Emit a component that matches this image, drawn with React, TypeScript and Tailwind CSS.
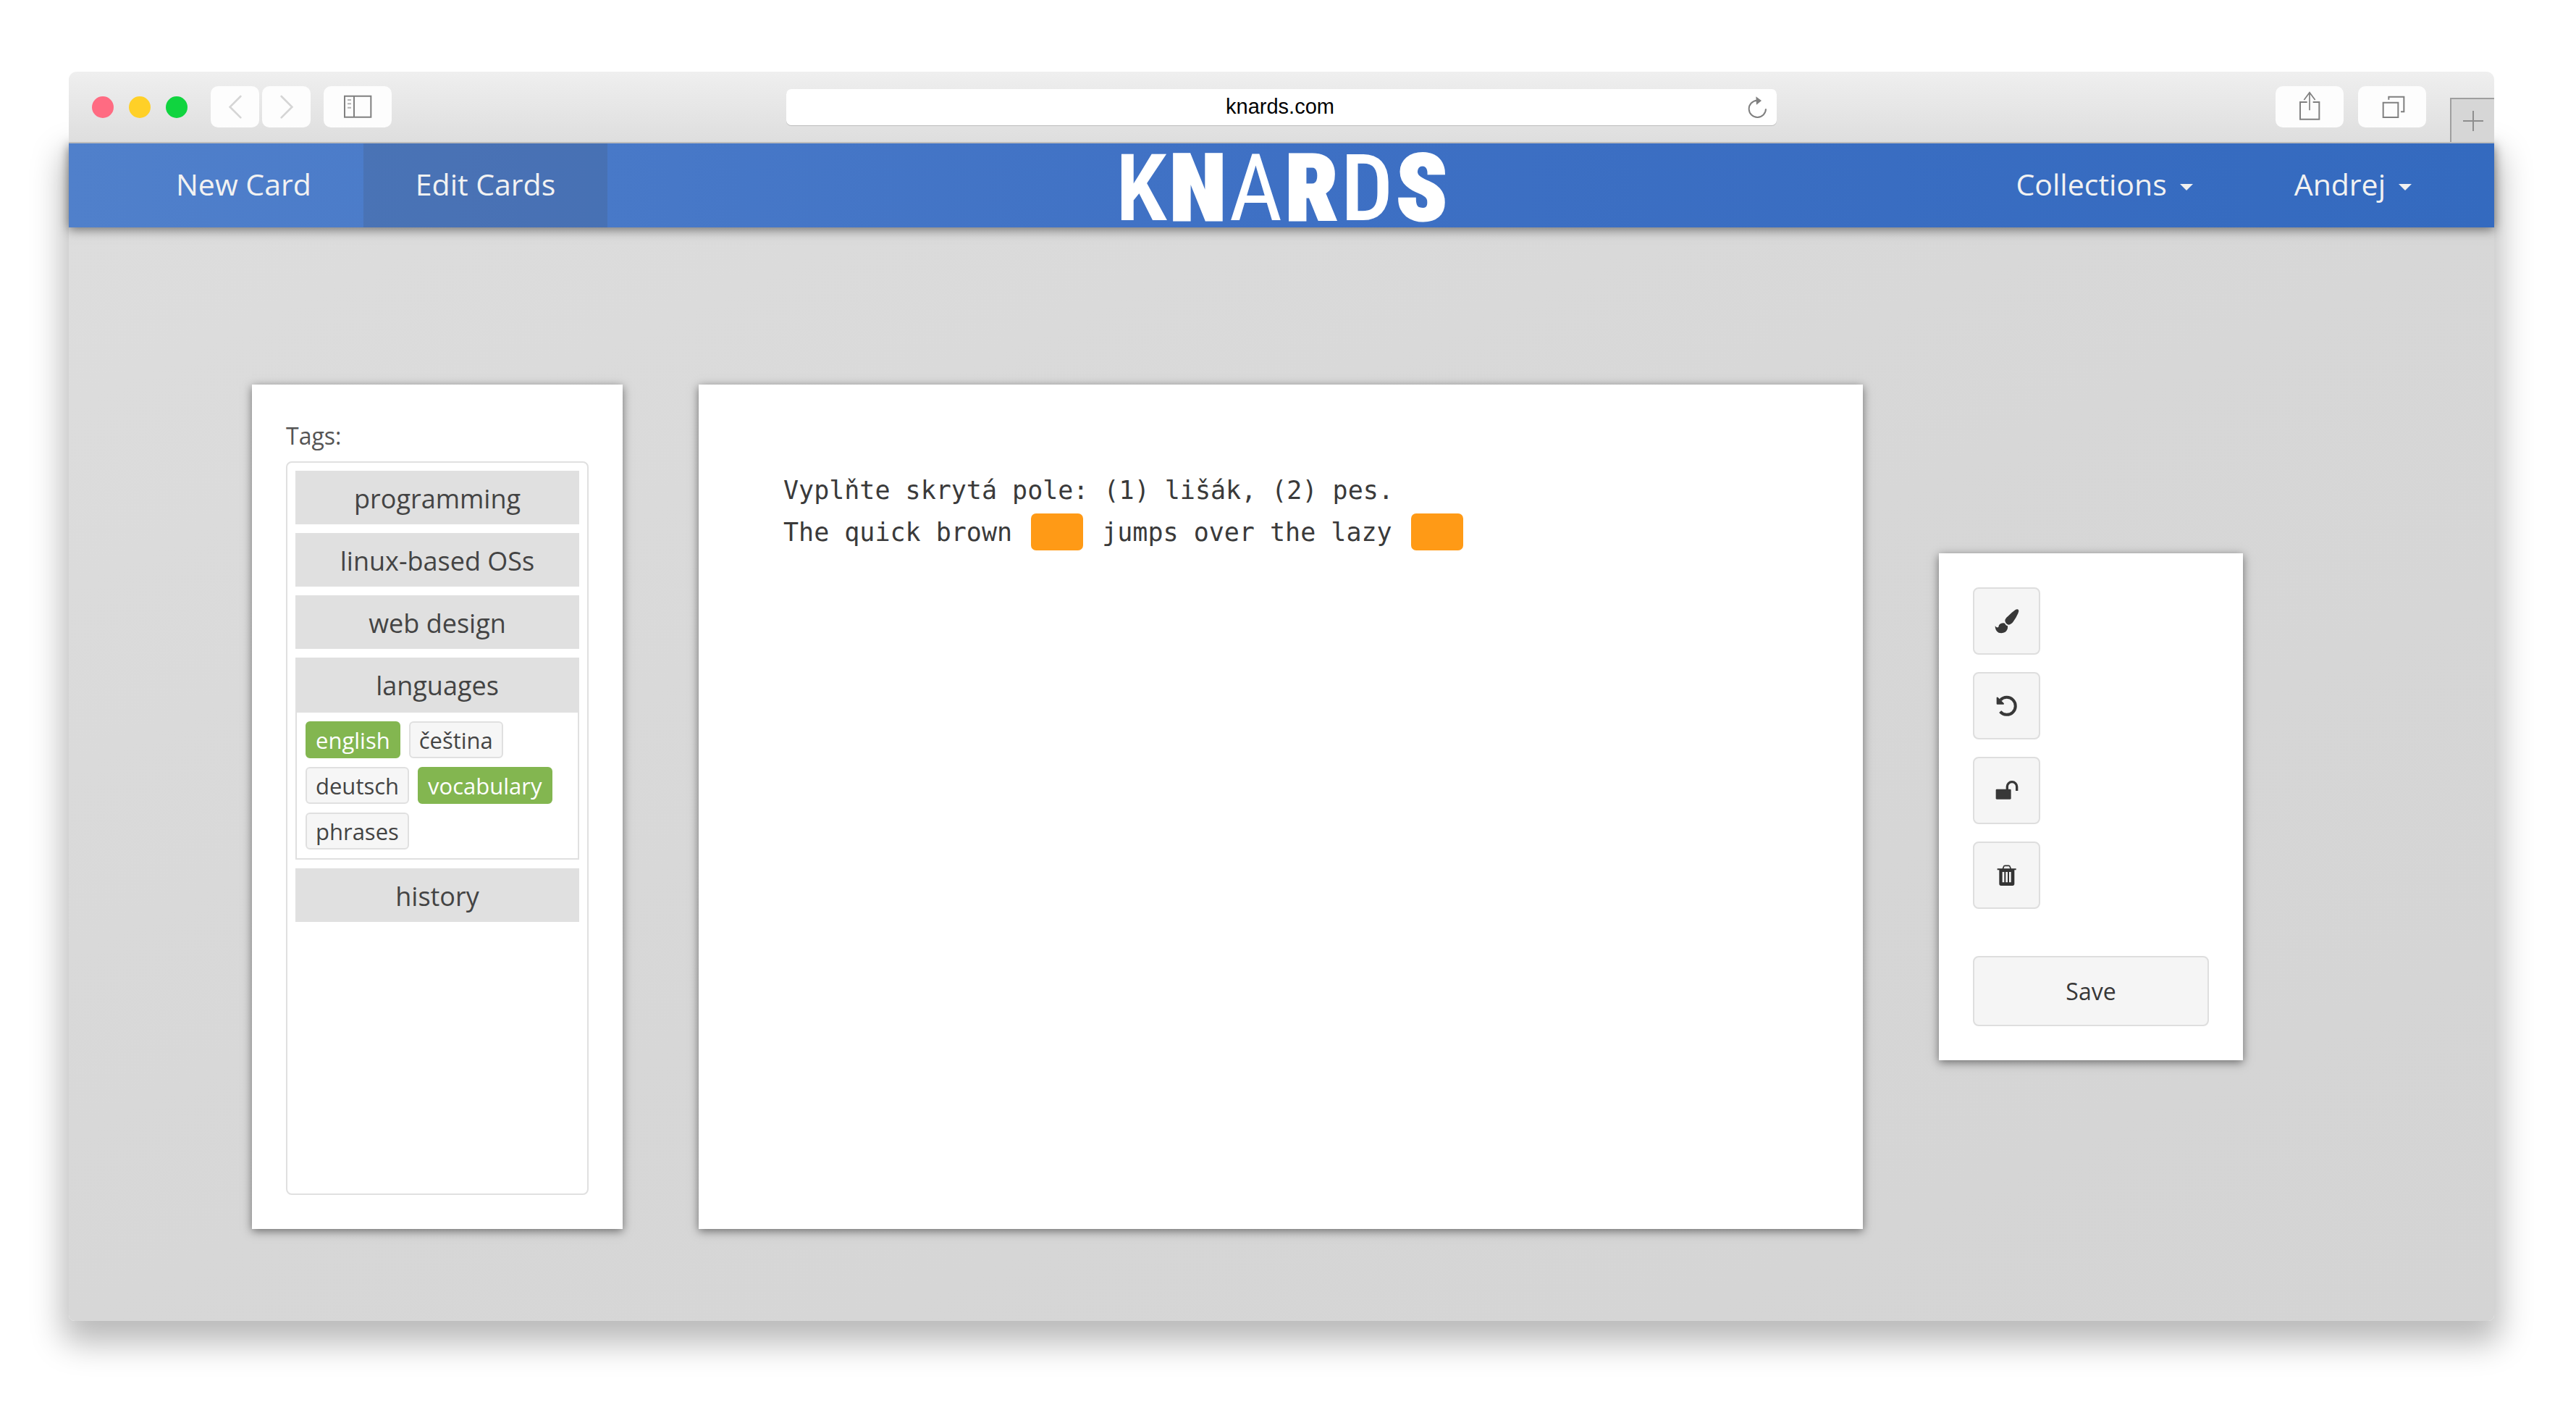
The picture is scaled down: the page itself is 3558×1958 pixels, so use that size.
import React, { useState } from "react";

type Tag = { name: string; active: boolean };

const topGroups = ["programming", "linux-based OSs", "web design"];

const languageTags: Tag[] = [
  { name: "english", active: true },
  { name: "čeština", active: false },
  { name: "deutsch", active: false },
  { name: "vocabulary", active: true },
  { name: "phrases", active: false },
];

function ToolbarButton({ label, wide, children }: { label: string; wide?: boolean; children: React.ReactNode }) {
  return (
    <button
      type="button"
      aria-label={label}
      className={`flex h-[57px] items-center justify-center rounded-[10px] bg-[#fdfdfd] ${wide ? "w-[94px]" : "w-[67px]"}`}
    >
      {children}
    </button>
  );
}

function BrowserToolbar() {
  return (
    <header className="relative z-10 grid h-[99px] grid-cols-[1fr_minmax(0,1368px)_1fr] items-center rounded-t-[11px] border-b-2 border-[#bdbdbd] bg-linear-to-b from-[#efefef] to-[#dedede]">
      <div className="flex items-center pl-8">
        <div className="flex gap-[21px]">
          <button type="button" aria-label="Close" className="size-[30px] rounded-full bg-[#ff6b82]" />
          <button type="button" aria-label="Minimize" className="size-[30px] rounded-full bg-[#ffd027]" />
          <button type="button" aria-label="Zoom" className="size-[30px] rounded-full bg-[#10d43f]" />
        </div>
        <div className="ml-8 flex gap-1">
          <ToolbarButton label="Back">
            <svg viewBox="103 64 60 105" className="h-[35px] w-[20px]" fill="none" stroke="#d5d5d5" strokeWidth="8" strokeLinecap="round">
              <path d="M155 73L111 117L155 161" />
            </svg>
          </ToolbarButton>
          <ToolbarButton label="Forward">
            <svg viewBox="317 64 60 105" className="h-[35px] w-[20px]" fill="none" stroke="#d5d5d5" strokeWidth="8" strokeLinecap="round">
              <path d="M325 73L369 117L325 161" />
            </svg>
          </ToolbarButton>
        </div>
        <div className="ml-[18px]">
          <ToolbarButton label="Show sidebar" wide>
            <svg viewBox="582 63 120 105" className="h-[35px] w-[40px]" fill="none" stroke="#808080" strokeWidth="6">
              <path d="M588 71H697V158H588ZM627 71V158" />
              <path d="M600 87H615M600 103H615M600 119H615" stroke="#b4b4b4" />
            </svg>
          </ToolbarButton>
        </div>
      </div>
      <div className="relative">
        <input
          type="text"
          aria-label="Address"
          defaultValue="knards.com"
          className="h-[50px] w-full rounded-[7px] bg-white pr-1 text-center font-['Liberation_Sans'] text-[29px] text-black shadow-[0_1px_0_#bcbcbc]"
        />
        <button type="button" aria-label="Reload" className="absolute inset-y-0 right-[13px] flex items-center">
          <svg viewBox="46 40 81 90" className="h-[30px] w-[27px]">
            <path d="M121 92A35 35 0 1 1 84 57" fill="none" stroke="#808080" strokeWidth="6" />
            <path d="M80 41L103 58L82 75Z" fill="#808080" />
          </svg>
        </button>
      </div>
      <div className="flex items-center justify-end self-stretch">
        <div className="flex gap-5">
          <ToolbarButton label="Share" wide>
            <svg viewBox="163 48 90 135" className="h-[45px] w-[30px]" fill="none" stroke="#808080" strokeWidth="6">
              <path d="M198 96H169V167H248V96H222" />
              <path d="M208 130V56M185 87L208 56L231 87" strokeWidth="5" />
            </svg>
          </ToolbarButton>
          <ToolbarButton label="Show tabs" wide>
            <svg viewBox="500 64 105 102" className="h-[34px] w-[35px]" fill="none" stroke="#808080" strokeWidth="6">
              <path d="M514 96H576V157H514Z" />
              <path d="M537 84V72H600V134H587" />
            </svg>
          </ToolbarButton>
        </div>
        <button
          type="button"
          aria-label="New tab"
          className="ml-[33px] flex h-[61px] w-[61px] items-center justify-center self-end border-t-2 border-l-2 border-[#9f9f9f] bg-[#d6d6d6]"
        >
          <svg viewBox="0 0 28 28" className="size-7" stroke="#8e8e8e" strokeWidth="2">
            <path d="M0 14H28M14 0V28" />
          </svg>
        </button>
      </div>
    </header>
  );
}

function Caret() {
  return (
    <svg viewBox="0 0 18 9" className="mt-[7px] h-[9px] w-[18px]" fill="#f0f0f0">
      <path d="M0 0H18L9 9Z" />
    </svg>
  );
}

function SiteNav() {
  return (
    <nav className="relative grid h-[116px] grid-cols-[1fr_auto_1fr] bg-linear-to-r from-[#5080cb] via-[#3e70c4] to-[#346abf] text-[41px] text-[#f2f2f2] shadow-[0_3px_14px_rgba(0,0,0,0.5)]">
      <div className="flex pl-[76px]">
        <a href="#new" className="flex items-center px-[72px] pb-0.5">New Card</a>
        <a href="#edit" aria-current="page" className="flex items-center bg-[#404040]/15 px-[72px] pb-0.5">Edit Cards</a>
      </div>
      <a href="#home" className="flex gap-1 pt-2 font-['Roboto_Condensed'] text-[128px] leading-[108px] text-white">
        <span className="font-semibold">K</span>
        <span className="font-black [-webkit-text-stroke:3px_white]">N</span>
        <span className="font-normal">A</span>
        <span className="font-black [-webkit-text-stroke:3px_white]">R</span>
        <span className="font-medium">D</span>
        <span className="font-black [-webkit-text-stroke:3px_white]">S</span>
      </a>
      <div className="flex justify-end pr-[44px]">
        <button type="button" className="flex items-center gap-[18px] px-[70px] pb-0.5">Collections<Caret /></button>
        <button type="button" className="flex items-center gap-[18px] px-[70px] pb-0.5">Andrej<Caret /></button>
      </div>
    </nav>
  );
}

function GroupHeader({ name }: { name: string }) {
  return (
    <button type="button" className="h-[74px] w-full bg-[#e0e0e0] pt-1 text-[36px] leading-[48px] font-medium text-[#444]">
      {name}
    </button>
  );
}

function TagsPanel() {
  const [tags, setTags] = useState(languageTags);
  const toggle = (name: string) =>
    setTags(tags.map((t) => (t.name === name ? { ...t, active: !t.active } : t)));

  return (
    <aside className="flex w-[512px] shrink-0 flex-col self-stretch bg-white p-[47px] shadow-[0_3px_12px_rgba(0,0,0,0.5)]">
      <h2 id="tags-title" className="text-[32px] leading-[48px] text-[#555]">Tags:</h2>
      <div aria-labelledby="tags-title" role="group" className="mt-[11px] flex flex-1 flex-col gap-3 rounded-lg border-2 border-[#e0e0e0] p-[11px]">
        {topGroups.map((name) => (
          <GroupHeader key={name} name={name} />
        ))}
        <section>
          <GroupHeader name="languages" />
          <div className="flex flex-wrap gap-3 border-2 border-[#e0e0e0] p-3">
            {tags.map((tag) => (
              <button
                key={tag.name}
                type="button"
                aria-pressed={tag.active}
                onClick={() => toggle(tag.name)}
                className={`h-[51px] rounded-md border-2 px-3 text-[31px] leading-[42px] ${
                  tag.active ? "border-[#83b650] bg-[#83b650] text-white" : "border-[#e0e0e0] bg-[#f6f6f6] text-[#444]"
                }`}
              >
                {tag.name}
              </button>
            ))}
          </div>
        </section>
        <GroupHeader name="history" />
      </div>
    </aside>
  );
}

function Blank() {
  return <span className="mx-[5px] mb-1.5 inline-block h-[51px] w-[72px] rounded-[7px] bg-[#ff9a16] align-middle" />;
}

function CardEditor() {
  return (
    <main className="min-h-[1166px] min-w-0 flex-1 bg-white px-[117px] pt-[117px] font-['DejaVu_Sans_Mono'] text-[35px] leading-[58px] text-[#3a3a3a] shadow-[0_3px_12px_rgba(0,0,0,0.5)]">
      <p>Vyplňte skrytá pole: (1) lišák, (2) pes.</p>
      <p>
        The quick brown <Blank /> jumps over the lazy <Blank />
      </p>
    </main>
  );
}

function ActionButton({ label, children }: { label: string; children: React.ReactNode }) {
  return (
    <button
      type="button"
      aria-label={label}
      className="flex size-[93px] items-center justify-center rounded-lg border-2 border-[#dedede] bg-[#f5f5f5]"
    >
      {children}
    </button>
  );
}

function ActionsPanel() {
  return (
    <aside className="flex w-[420px] shrink-0 flex-col gap-6 bg-white p-[47px] shadow-[0_3px_12px_rgba(0,0,0,0.5)]">
      <ActionButton label="Paint">
        <svg viewBox="154 143 120 120" className="size-10" fill="#383838">
          <path d="M248 156Q258 149 262 156Q265 161 260 170Q252 188 241 203Q232 216 221 217Q208 214 206 200Q206 192 218 182Q234 166 248 156Z" />
          <path d="M165 222Q172 232 179 226Q181 211 198 210Q206 210 207 214Q210 220 217 222Q219 238 207 247Q195 254 180 250Q165 243 165 222Z" />
        </svg>
      </ActionButton>
      <ActionButton label="Undo">
        <svg viewBox="154 493 120 120" className="size-10" fill="#383838">
          <path d="M186 576A36 36 0 1 0 187 528" fill="none" stroke="#383838" strokeWidth="12" />
          <path d="M171 518Q173 513 177 517L201 541Q204 545 200 546H174Q171 546 171 543Z" />
        </svg>
      </ActionButton>
      <ActionButton label="Unlock">
        <svg viewBox="154 843 120 120" className="size-10" fill="#383838">
          <rect x="168" y="896" width="63" height="42" rx="4" />
          <path d="M215 900V886A20 20 0 0 1 255 886V903" fill="none" stroke="#383838" strokeWidth="10" />
        </svg>
      </ActionButton>
      <ActionButton label="Delete">
        <svg viewBox="154 1193 120 120" className="size-10" fill="#333">
          <path d="M174 1224H252V1230H245V1287Q245 1295 237 1295H190Q182 1295 182 1287V1230H174ZM195 1238V1281H203V1238ZM209 1238V1281H217V1238ZM223 1238V1281H231V1238Z" fillRule="evenodd" />
          <path d="M197 1226L201 1215Q202 1212 206 1212H221Q225 1212 226 1215L230 1226" fill="none" stroke="#333" strokeWidth="5" />
        </svg>
      </ActionButton>
      <button
        type="button"
        className="mt-[41px] h-[97px] w-full rounded-lg border-2 border-[#dedede] bg-[#f5f5f5] text-[32px] leading-[44px] text-[#383838]"
      >
        Save
      </button>
    </aside>
  );
}

export default function App() {
  return (
    <div className="min-h-screen bg-white pt-[99px] pr-[113px] pb-[134px] pl-[95px] font-['Open_Sans',sans-serif]">
      <BrowserToolbar />
      <div className="rounded-b-lg shadow-[0_22px_45px_8px_rgba(0,0,0,0.28)]">
        <SiteNav />
        <div className="flex items-center gap-[105px] rounded-b-lg bg-linear-to-br from-[#dddddd] via-[#d7d7d7] to-[#d4d4d4] pt-[217px] pr-[347px] pb-[127px] pl-[253px]">
          <TagsPanel />
          <CardEditor />
          <ActionsPanel />
        </div>
      </div>
    </div>
  );
}
